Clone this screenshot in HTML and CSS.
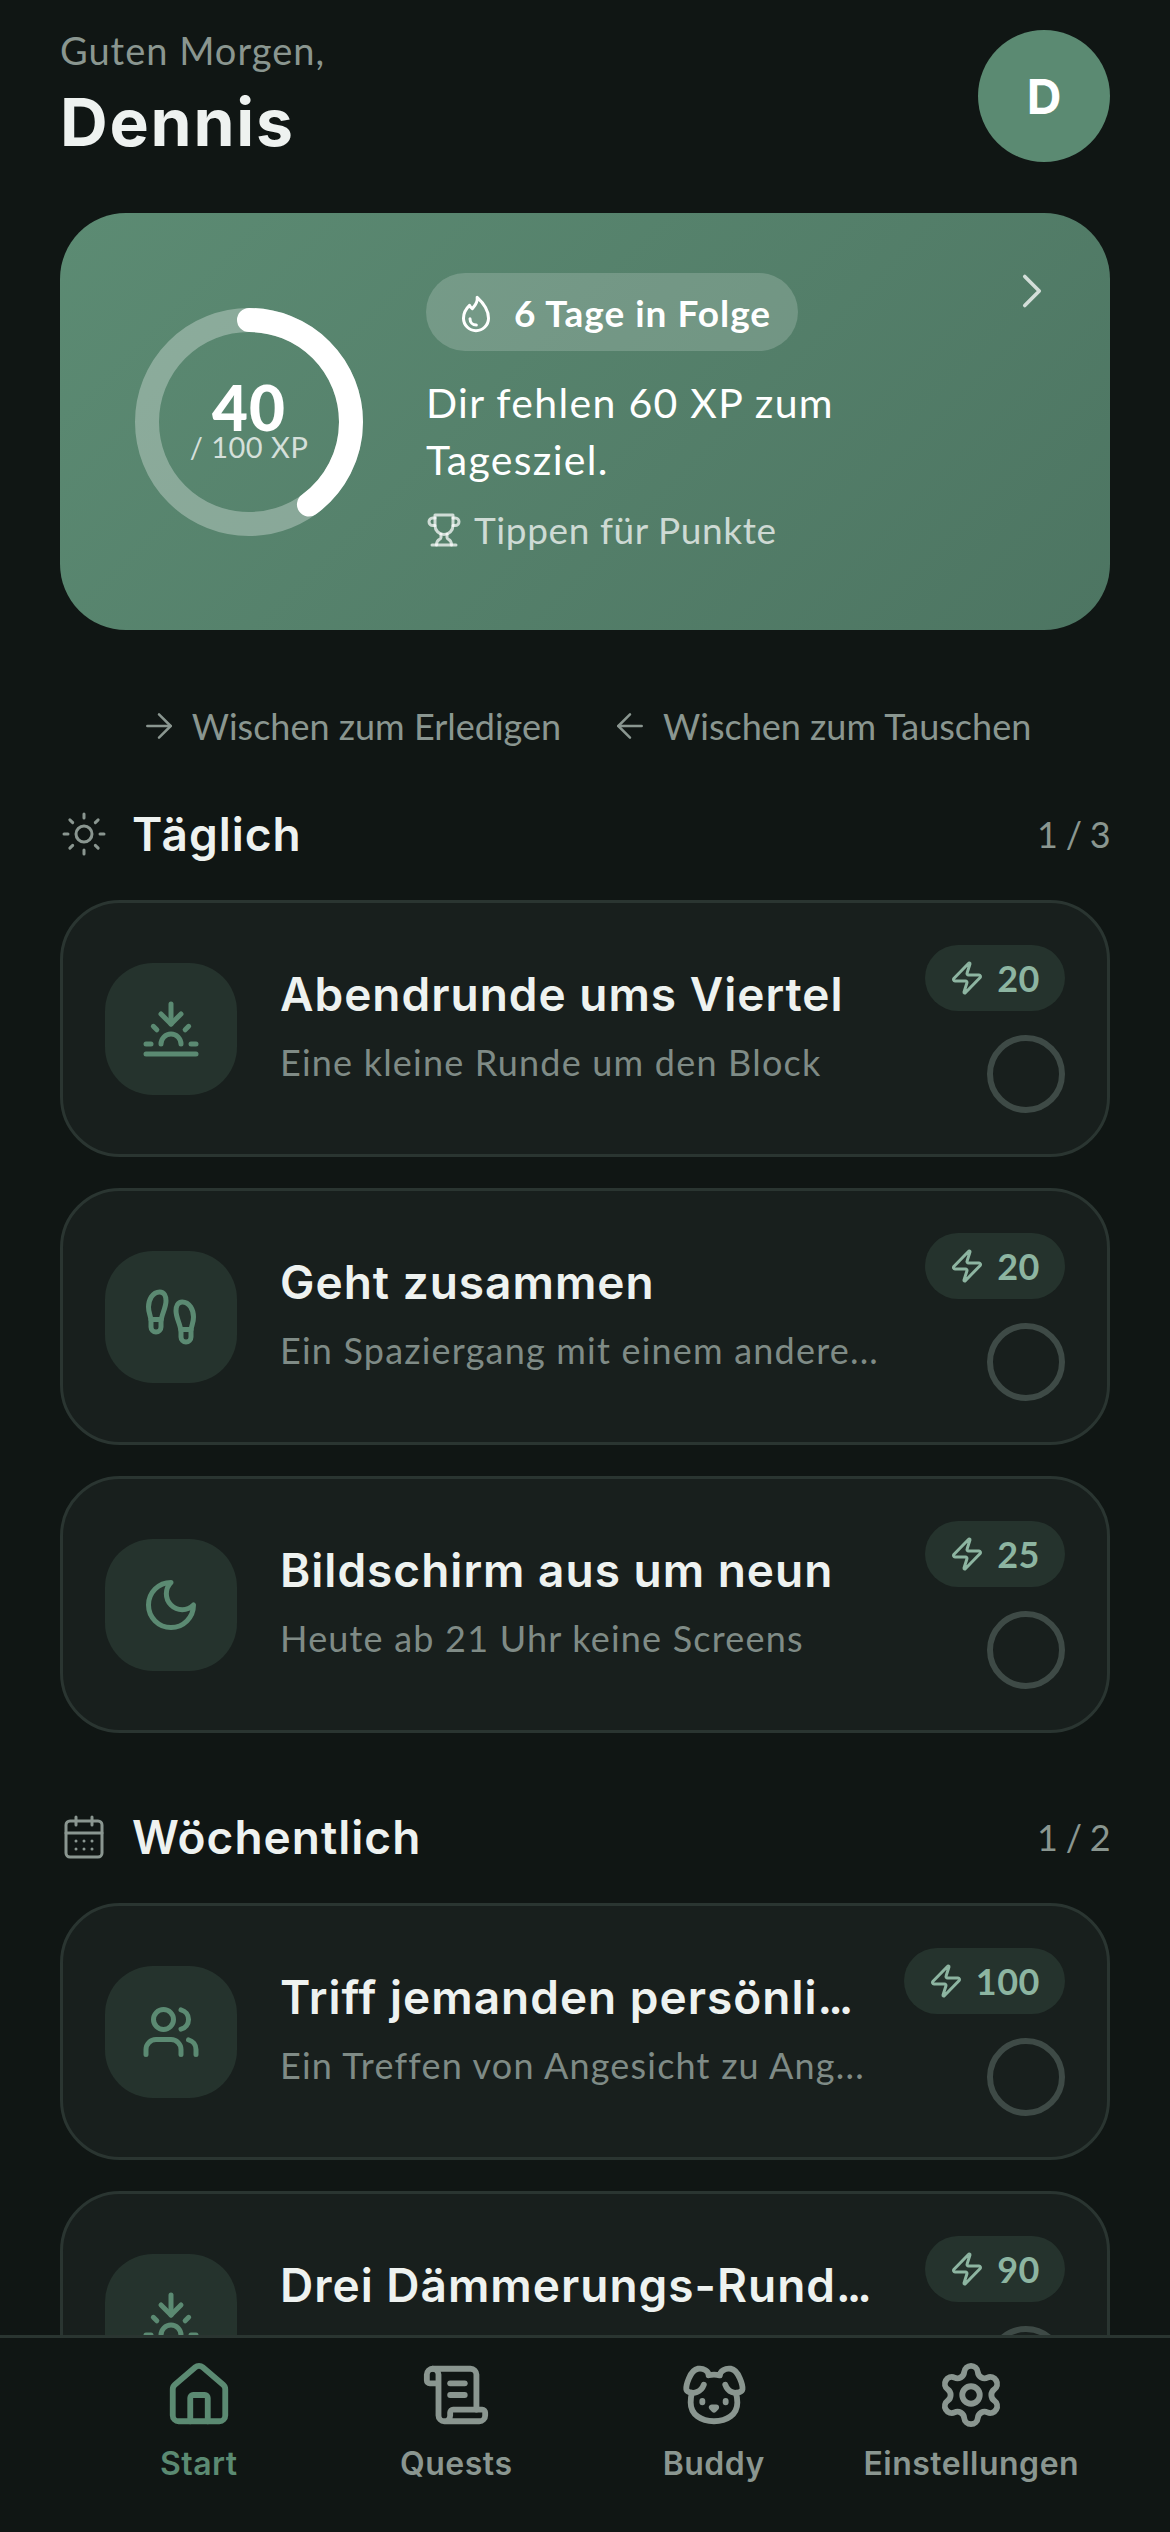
FILE: index.html
```html
<!DOCTYPE html>
<html lang="de">
<head>
<meta charset="utf-8">
<title>Start</title>
<link rel="stylesheet" href="styles.css">
</head>
<body>
<div class="app">
<main class="scroll">
  <header class="top">
    <div class="hello">
      <p class="greet">Guten Morgen,</p>
      <h1 class="name">Dennis</h1>
    </div>
    <div class="avatar">D</div>
  </header>

  <section class="hero">
    <div class="ring">
      <svg class="ring-svg" viewBox="0 0 228 228">
        <circle class="ring-track" cx="114" cy="114" r="102"/>
        <circle class="ring-value" cx="114" cy="114" r="102" pathLength="100" stroke-dasharray="40 100" transform="rotate(-90 114 114)"/>
      </svg>
      <div class="ring-text"><span class="ring-num">40</span><span class="ring-of">/ 100 XP</span></div>
    </div>
    <div class="hero-body">
      <div class="streak">
        <svg class="ic ic-flame" viewBox="0 0 24 24"><path d="M12.7 2c.5 3.3-1.3 5-2.900 6.800-.7-.4-1.300-1.100-1.700-2C6 8.800 4.500 11.600 4.500 14.500a7.500 7.500 0 0 0 15 0C19.500 9.500 16 5 12.700 2Z"/><path d="M8.400 14.800c0 2.100 1.600 3.800 3.800 3.800"/></svg>
        <span>6 Tage in Folge</span>
      </div>
      <p class="hero-msg">Dir fehlen 60 XP zum Tagesziel.</p>
      <p class="hero-tap">
        <svg class="ic ic-trophy" viewBox="0 0 24 24"><path d="M6 9H4.500a2.500 2.500 0 0 1 0-5H6"/><path d="M18 9h1.500a2.500 2.500 0 0 0 0-5H18"/><path d="M4 22h16"/><path d="M10 14.660V17c0 .550-.470.980-.970 1.210C7.850 18.750 7 20.240 7 22"/><path d="M14 14.660V17c0 .550.470.980.970 1.210C16.150 18.750 17 20.240 17 22"/><path d="M18 2H6v7a6 6 0 0 0 12 0V2Z"/></svg>
        <span>Tippen für Punkte</span>
      </p>
    </div>
    <svg class="ic hero-chev" viewBox="0 0 24 24"><path d="m9 18 6-6-6-6"/></svg>
  </section>

  <div class="hints">
    <span class="hint"><svg class="ic ic-arrow" viewBox="0 0 24 24"><path d="M5 12h14"/><path d="m12 5 7 7-7 7"/></svg>Wischen zum Erledigen</span>
    <span class="hint"><svg class="ic ic-arrow" viewBox="0 0 24 24"><path d="M19 12H5"/><path d="m12 19-7-7 7-7"/></svg>Wischen zum Tauschen</span>
  </div>

  <div class="sec-head">
    <svg class="ic sec-ic" viewBox="0 0 24 24"><circle cx="12" cy="12" r="4"/><path d="M12 2v2"/><path d="M12 20v2"/><path d="m4.930 4.930 1.410 1.410"/><path d="m17.660 17.660 1.410 1.410"/><path d="M2 12h2"/><path d="M20 12h2"/><path d="m6.340 17.660-1.410 1.410"/><path d="m19.070 4.930-1.410 1.410"/></svg>
    <h2 class="sec-title">Täglich</h2>
    <span class="sec-count">1 / 3</span>
  </div>
  <div class="list">
    <article class="card">
      <div class="card-ic"><svg class="ic" viewBox="0 0 24 24"><path d="M12 10V2"/><path d="m4.930 10.930 1.410 1.410"/><path d="M2 18h2"/><path d="M20 18h2"/><path d="m19.070 10.930-1.410 1.410"/><path d="M22 22H2"/><path d="m16 6-4 4-4-4"/><path d="M16 18a4 4 0 0 0-8 0"/></svg></div>
      <div class="card-text"><h3 class="card-title">Abendrunde ums Viertel</h3><p class="card-sub">Eine kleine Runde um den Block</p></div>
      <div class="card-side">
        <span class="xp"><svg class="ic ic-zap" viewBox="0 0 24 24"><path d="M4 14a1 1 0 0 1-.780-1.630l9.900-10.200a.500.500 0 0 1 .860.460l-1.920 6.020A1 1 0 0 0 13 10h7a1 1 0 0 1 .780 1.630l-9.900 10.200a.500.500 0 0 1-.860-.460l1.920-6.020A1 1 0 0 0 11 14z"/></svg>20</span>
        <span class="check"></span>
      </div>
    </article>
    <article class="card">
      <div class="card-ic"><svg class="ic" viewBox="0 0 24 24"><path d="M4 16v-2.380C4 11.500 2.970 10.500 3 8c.030-2.720 1.490-6 4.500-6C9.370 2 10 3.800 10 5.500c0 3.110-2 5.660-2 8.680V16a2 2 0 1 1-4 0Z"/><path d="M20 20v-2.380c0-2.120 1.030-3.120 1-5.620-.030-2.720-1.490-6-4.500-6C14.630 6 14 7.800 14 9.500c0 3.110 2 5.660 2 8.680V20a2 2 0 1 0 4 0Z"/><path d="M16 17h4"/><path d="M4 13h4"/></svg></div>
      <div class="card-text"><h3 class="card-title">Geht zusammen</h3><p class="card-sub">Ein Spaziergang mit einem andere...</p></div>
      <div class="card-side">
        <span class="xp"><svg class="ic ic-zap" viewBox="0 0 24 24"><path d="M4 14a1 1 0 0 1-.780-1.630l9.900-10.200a.500.500 0 0 1 .860.460l-1.920 6.020A1 1 0 0 0 13 10h7a1 1 0 0 1 .780 1.630l-9.900 10.200a.500.500 0 0 1-.860-.460l1.920-6.020A1 1 0 0 0 11 14z"/></svg>20</span>
        <span class="check"></span>
      </div>
    </article>
    <article class="card">
      <div class="card-ic"><svg class="ic" viewBox="0 0 24 24"><path d="M12 3a6 6 0 0 0 9 9 9 9 0 1 1-9-9Z"/></svg></div>
      <div class="card-text"><h3 class="card-title">Bildschirm aus um neun</h3><p class="card-sub">Heute ab 21 Uhr keine Screens</p></div>
      <div class="card-side">
        <span class="xp"><svg class="ic ic-zap" viewBox="0 0 24 24"><path d="M4 14a1 1 0 0 1-.780-1.630l9.900-10.200a.500.500 0 0 1 .860.460l-1.920 6.020A1 1 0 0 0 13 10h7a1 1 0 0 1 .780 1.630l-9.900 10.200a.500.500 0 0 1-.860-.460l1.920-6.020A1 1 0 0 0 11 14z"/></svg>25</span>
        <span class="check"></span>
      </div>
    </article>
  </div>

  <div class="sec-head sec-week">
    <svg class="ic sec-ic" viewBox="0 0 24 24"><path d="M8 2v4"/><path d="M16 2v4"/><rect width="18" height="18" x="3" y="4" rx="2"/><path d="M3 10h18"/><path d="M8 14h.010"/><path d="M12 14h.010"/><path d="M16 14h.010"/><path d="M8 18h.010"/><path d="M12 18h.010"/><path d="M16 18h.010"/></svg>
    <h2 class="sec-title">Wöchentlich</h2>
    <span class="sec-count">1 / 2</span>
  </div>
  <div class="list">
    <article class="card">
      <div class="card-ic"><svg class="ic" viewBox="0 0 24 24"><path d="M16 21v-2a4 4 0 0 0-4-4H6a4 4 0 0 0-4 4v2"/><circle cx="9" cy="7" r="4"/><path d="M22 21v-2a4 4 0 0 0-3-3.870"/><path d="M16 3.130a4 4 0 0 1 0 7.750"/></svg></div>
      <div class="card-text"><h3 class="card-title">Triff jemanden persönli<span class="dots">...</span></h3><p class="card-sub">Ein Treffen von Angesicht zu Ang...</p></div>
      <div class="card-side">
        <span class="xp"><svg class="ic ic-zap" viewBox="0 0 24 24"><path d="M4 14a1 1 0 0 1-.780-1.630l9.900-10.200a.500.500 0 0 1 .860.460l-1.920 6.020A1 1 0 0 0 13 10h7a1 1 0 0 1 .780 1.630l-9.900 10.200a.500.500 0 0 1-.860-.460l1.920-6.020A1 1 0 0 0 11 14z"/></svg>100</span>
        <span class="check"></span>
      </div>
    </article>
    <article class="card">
      <div class="card-ic"><svg class="ic" viewBox="0 0 24 24"><path d="M12 10V2"/><path d="m4.930 10.930 1.410 1.410"/><path d="M2 18h2"/><path d="M20 18h2"/><path d="m19.070 10.930-1.410 1.410"/><path d="M22 22H2"/><path d="m16 6-4 4-4-4"/><path d="M16 18a4 4 0 0 0-8 0"/></svg></div>
      <div class="card-text"><h3 class="card-title">Drei Dämmerungs-Rund<span class="dots">...</span></h3><p class="card-sub"></p></div>
      <div class="card-side">
        <span class="xp"><svg class="ic ic-zap" viewBox="0 0 24 24"><path d="M4 14a1 1 0 0 1-.780-1.630l9.900-10.200a.500.500 0 0 1 .860.460l-1.920 6.020A1 1 0 0 0 13 10h7a1 1 0 0 1 .780 1.630l-9.900 10.200a.500.500 0 0 1-.860-.460l1.920-6.020A1 1 0 0 0 11 14z"/></svg>90</span>
        <span class="check"></span>
      </div>
    </article>
  </div>
</main>

<nav class="tabs">
  <a class="tab tab-on"><svg class="ic tab-ic" viewBox="0 0 24 24"><path d="M15 21v-8a1 1 0 0 0-1-1h-4a1 1 0 0 0-1 1v8"/><path d="M3 10a2 2 0 0 1 .709-1.528l7-5.999a2 2 0 0 1 2.582 0l7 5.999A2 2 0 0 1 21 10v9a2 2 0 0 1-2 2H5a2 2 0 0 1-2-2z"/></svg><span>Start</span></a>
  <a class="tab"><svg class="ic tab-ic" viewBox="0 0 24 24"><path d="M15 12h-5"/><path d="M15 8h-5"/><path d="M19 17V5a2 2 0 0 0-2-2H4"/><path d="M8 21h12a2 2 0 0 0 2-2v-1a1 1 0 0 0-1-1H11a1 1 0 0 0-1 1v1a2 2 0 1 1-4 0V5a2 2 0 1 0-4 0v2a1 1 0 0 0 1 1h3"/></svg><span>Quests</span></a>
  <a class="tab"><svg class="ic tab-ic" viewBox="0 0 24 24"><path d="M11.250 16.250h1.500L12 17z"/><path d="M16 14v.5"/><path d="M4.420 11.247A13.152 13.152 0 0 0 4 14.556C4 18.728 7.582 21 12 21s8-2.272 8-6.444a11.702 11.702 0 0 0-.493-3.309"/><path d="M8 14v.5"/><path d="M8.500 8.500c-.384 1.050-1.083 2.028-2.344 2.500-1.931.722-3.576-.297-3.656-1-.113-.994 1.177-6.530 4-7 1.923-.321 3.651.845 3.651 2.235A7.497 7.497 0 0 1 14 5.277c0-1.390 1.844-2.598 3.767-2.277 2.823.470 4.113 6.006 4 7-.080.703-1.725 1.722-3.656 1-1.261-.472-1.855-1.450-2.239-2.500"/></svg><span>Buddy</span></a>
  <a class="tab"><svg class="ic tab-ic" viewBox="0 0 24 24"><path d="M9.671 4.136a2.340 2.340 0 0 1 4.659 0 2.340 2.340 0 0 0 3.319 1.915 2.340 2.340 0 0 1 2.330 4.033 2.340 2.340 0 0 0 0 3.831 2.340 2.340 0 0 1-2.330 4.033 2.340 2.340 0 0 0-3.319 1.915 2.340 2.340 0 0 1-4.659 0 2.340 2.340 0 0 0-3.320-1.915 2.340 2.340 0 0 1-2.330-4.033 2.340 2.340 0 0 0 0-3.831A2.340 2.340 0 0 1 6.350 6.051a2.340 2.340 0 0 0 3.319-1.915"/><circle cx="12" cy="12" r="3"/></svg><span>Einstellungen</span></a>
</nav>
</div>
</body>
</html>
```
FILE: styles.css
```css
* { box-sizing: border-box; }
html, body { margin: 0; height: 100%; }
body {
  background: #101614;
  color: #eef2f0;
  font-family: "Lato", "Noto Sans", sans-serif;
  overflow: hidden;
}
h1, h2, h3, p { margin: 0; font-weight: inherit; }

.app { width: 1170px; height: 2532px; display: flex; flex-direction: column; }
.scroll { flex: 1; min-height: 0; overflow: hidden; padding: 0 60px; }

.ic {
  display: block;
  flex: none;
  fill: none;
  stroke: currentColor;
  stroke-width: 2;
  stroke-linecap: round;
  stroke-linejoin: round;
}

/* header */
.top { display: flex; justify-content: space-between; align-items: flex-start; padding-top: 26px; height: 213px; }
.greet { font-size: 38px; line-height: 48px; letter-spacing: 1px; color: #8a9690; }
.name { font-family: "Inter", sans-serif; font-weight: 700; font-size: 66px; line-height: 84px; margin-top: 6px; color: #eef2f0; letter-spacing: 1.800px; }
.avatar {
  width: 132px; height: 132px; margin-top: 4px; border-radius: 50%;
  background: #5b8a72; color: #fff;
  display: flex; align-items: center; justify-content: center;
  font-family: "Inter", sans-serif; font-weight: 700; font-size: 48px;
}

/* hero */
.hero {
  position: relative;
  height: 417px;
  border-radius: 66px;
  background: linear-gradient(135deg, #5c8b73 0%, #4d7562 100%);
  display: flex; align-items: center;
  padding-left: 75px;
  color: #fff;
}
.ring { width: 228px; height: 228px; display: grid; place-items: center; flex: none; }
.ring-svg, .ring-text { grid-area: 1 / 1; }
.ring-svg { width: 228px; height: 228px; display: block; }
.ring-track, .ring-value { fill: none; stroke-width: 24; }
.ring-track { stroke: rgba(255,255,255,.3); }
.ring-value { stroke: #fff; stroke-linecap: round; }
.ring-text { display: flex; flex-direction: column; align-items: center; padding-top: 6px; }
.ring-num { font-weight: 900; font-size: 62px; line-height: 44px; letter-spacing: 1px; }
.ring-of { font-size: 29px; line-height: 36px; letter-spacing: .5px; color: rgba(255,255,255,.75); }

.hero-body { align-self: flex-start; margin: 60px 0 0 63px; width: 440px; }
.streak {
  display: inline-flex; align-items: center; gap: 18px;
  height: 78px; padding: 0 27px 0 30px;
  border-radius: 39px;
  background: rgba(255,255,255,.18);
  font-weight: 700; font-size: 37px; letter-spacing: 1px;
}
.ic-flame { width: 40px; height: 40px; margin-top: 4px; stroke-width: 1.800; }
.hero-msg { font-size: 41px; line-height: 57px; margin-top: 23px; letter-spacing: 1.300px; }
.hero-tap { display: flex; align-items: center; gap: 12px; margin-top: 17px; font-size: 37px; line-height: 50px; letter-spacing: .6px; color: rgba(255,255,255,.72); }
.ic-trophy { width: 36px; height: 36px; }
.hero-chev { position: absolute; top: 49px; right: 49px; width: 58px; height: 58px; stroke-width: 1.500; color: rgba(255,255,255,.75); }

/* hints */
.hints { display: flex; justify-content: center; gap: 49px; margin-top: 74px; height: 44px; font-size: 36px; line-height: 44px; color: #8a9690; }
.hint { display: inline-flex; align-items: center; gap: 13px; }
.ic-arrow { width: 40px; height: 40px; stroke-width: 1.500; }

/* section */
.sec-head { display: flex; align-items: center; margin-top: 58px; height: 56px; }
.sec-week { margin-top: 76px; }
.sec-ic { width: 48px; height: 48px; stroke-width: 1.500; color: #8a9690; }
.sec-title { font-family: "Inter", sans-serif; font-weight: 600; font-size: 46px; line-height: 56px; letter-spacing: 1px; margin-left: 24px; flex: 1; color: #eef2f0; }
.sec-count { font-size: 36px; letter-spacing: -.7px; color: #8a9690; }

.list { display: flex; flex-direction: column; gap: 31px; margin-top: 38px; }
.card {
  height: 257px; flex: none;
  display: flex; align-items: center;
  padding: 0 42px;
  border: 3px solid #2a3531;
  border-radius: 60px;
  background: #181f1d;
}
.card-ic {
  width: 132px; height: 132px; flex: none;
  border-radius: 48px;
  background: #25332d;
  color: #5b8a72;
  display: flex; align-items: center; justify-content: center;
}
.card-ic .ic { width: 60px; height: 60px; }
.card-text { flex: 1; min-width: 0; margin-left: 43px; padding-bottom: 8px; white-space: nowrap; }
.card-title { font-family: "Inter", sans-serif; font-weight: 600; font-size: 46px; line-height: 60px; letter-spacing: 1px; color: #eef2f0; }
.dots { letter-spacing: -4px; }
.card-sub { font-size: 36px; line-height: 46px; min-height: 46px; margin-top: 15px; letter-spacing: 1.200px; color: #7f8b86; }
.card-side { display: flex; flex-direction: column; align-items: flex-end; gap: 24px; flex: none; }
.xp {
  display: inline-flex; align-items: center; gap: 12px;
  height: 66px; padding: 0 25px 0 24px;
  border-radius: 33px;
  background: #25332d;
  color: #8db5a1;
  font-weight: 700; font-size: 36px; letter-spacing: .5px;
}
.ic-zap { width: 36px; height: 36px; stroke-width: 2; }
.check { width: 78px; height: 78px; border-radius: 50%; border: 6px solid #3e4a46; }

/* tabs */
.tabs {
  height: 197px; flex: none;
  display: grid; grid-template-columns: repeat(4, 1fr);
  padding: 0 70px;
  border-top: 3px solid #2a3531;
  background: #101614;
}
.tab {
  display: flex; flex-direction: column; align-items: center;
  padding-top: 22px;
  color: #8a9690;
  font-family: "Inter", sans-serif; font-weight: 600; font-size: 32px; line-height: 42px; letter-spacing: .5px;
  white-space: nowrap;
}
.tab-on { color: #5b8a72; }
.tab-ic { width: 70px; height: 70px; margin-bottom: 13px; }
```
